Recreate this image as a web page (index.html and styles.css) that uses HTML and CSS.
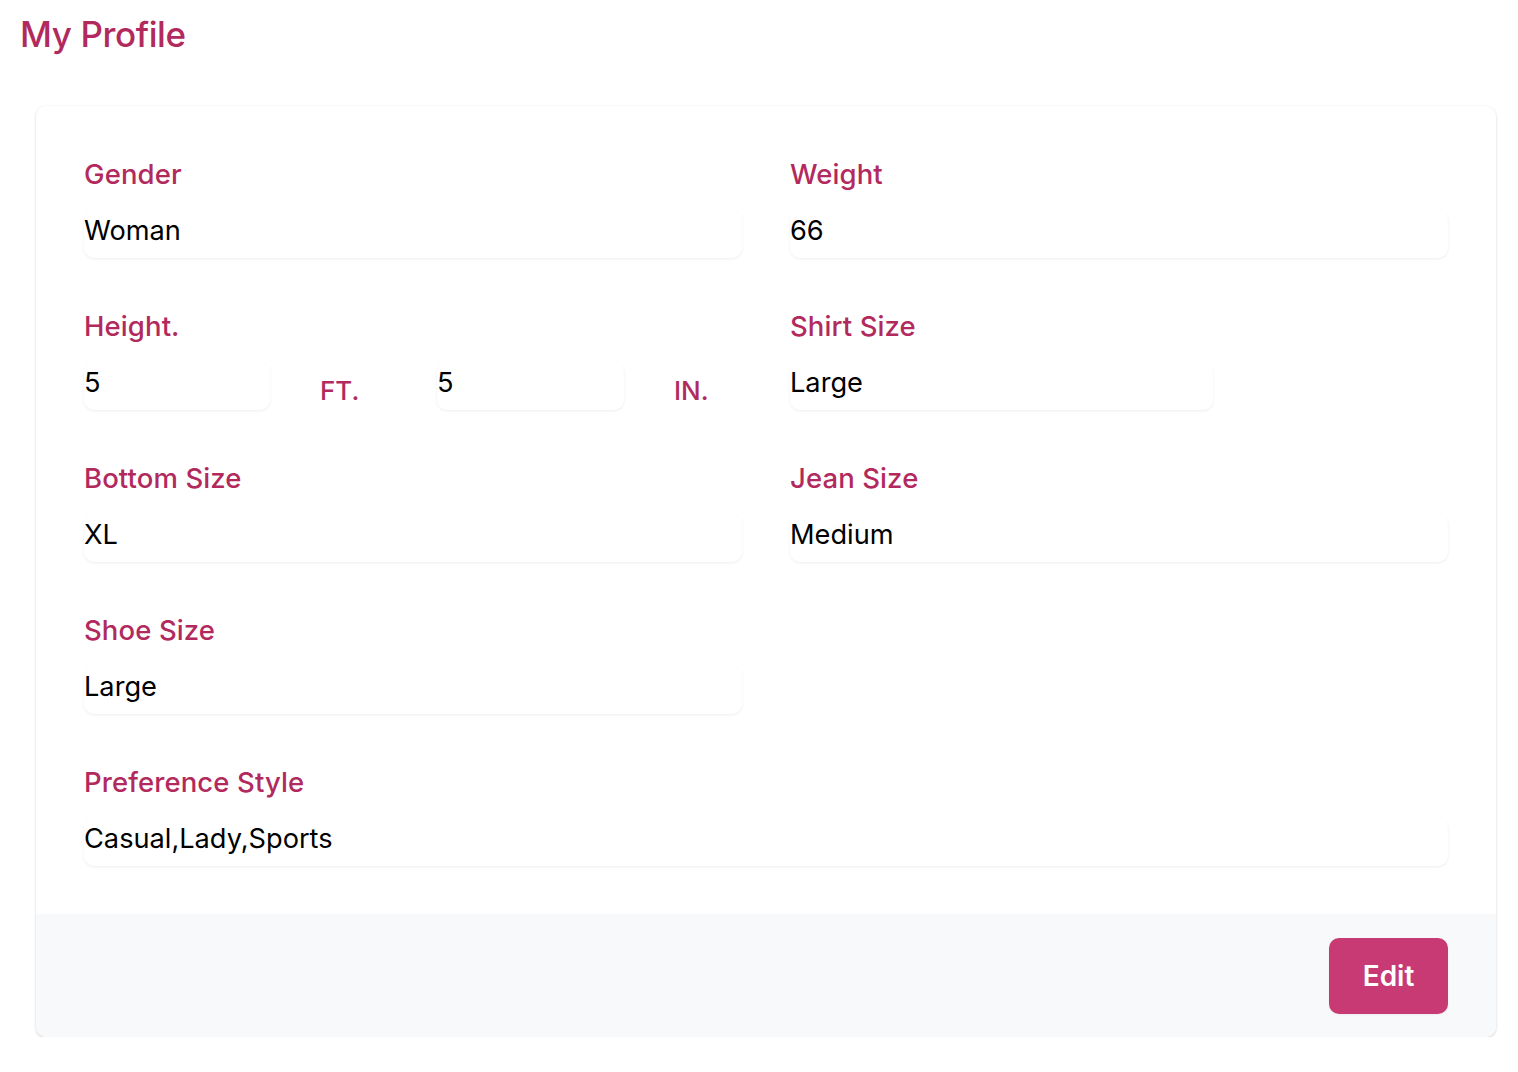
FILE: index.html
```html
<!DOCTYPE html>
<html>
<head>
<meta charset="utf-8">
<link rel="stylesheet" href="styles.css">
</head>
<body>
<h1 class="title">My Profile</h1>
<div class="card">
  <div class="card-body">
    <div class="field">
      <label class="label">Gender</label>
      <div class="input">Woman</div>
    </div>
    <div class="field">
      <label class="label">Weight</label>
      <div class="input">66</div>
    </div>
    <div class="field">
      <label class="label">Height.</label>
      <div class="height-row">
        <div class="input">5</div>
        <span class="unit">FT.</span>
        <div class="input">5</div>
        <span class="unit">IN.</span>
      </div>
    </div>
    <div class="field">
      <label class="label">Shirt Size</label>
      <div class="input input-shirt">Large</div>
    </div>
    <div class="field">
      <label class="label">Bottom Size</label>
      <div class="input">XL</div>
    </div>
    <div class="field">
      <label class="label">Jean Size</label>
      <div class="input">Medium</div>
    </div>
    <div class="field">
      <label class="label">Shoe Size</label>
      <div class="input">Large</div>
    </div>
    <div class="field field-full">
      <label class="label">Preference Style</label>
      <div class="input">Casual,Lady,Sports</div>
    </div>
  </div>
  <div class="card-footer">
    <button class="btn">Edit</button>
  </div>
</div>
</body>
</html>
```
FILE: styles.css
```css
* { box-sizing: border-box; }
body {
  margin: 0;
  padding: 0 22px 0 20px;
  font-family: Inter, "Noto Sans", sans-serif;
  background: #fff;
  color: #000;
}
.title {
  margin: 0;
  padding-top: 12px;
  height: 106px;
  font-size: 35px;
  line-height: 44px;
  font-weight: 500;
  color: #b22a5d;
  letter-spacing: -0.4px;
}
.card {
  margin-left: 16px;
  width: 1460px;
  border-radius: 10px;
  background: #fff;
  box-shadow: 0 1px 3px rgba(0,0,0,0.14), 0 1px 2px rgba(0,0,0,0.07);
  overflow: hidden;
}
.card-body {
  padding: 50px 48px 48px;
  display: grid;
  grid-template-columns: 1fr 1fr;
  column-gap: 48px;
  row-gap: 50px;
}
.field-full { grid-column: 1 / span 2; }
.label {
  display: block;
  padding-top: 2px;
  font-size: 27.5px;
  line-height: 32px;
  font-weight: 500;
  color: #b22a5d;
  margin-bottom: 20px;
  letter-spacing: 0.1px;
}
.input {
  height: 48px;
  border-radius: 10px;
  background: #fff;
  box-shadow: 0 1px 3px rgba(0,0,0,0.07);
  font-size: 27.2px;
  line-height: 42px;
  color: #000;
}
.input-shirt { width: 423px; }
.height-row {
  display: grid;
  grid-template-columns: 186px 167px 187px 1fr;
  align-items: start;
}
.unit {
  padding-left: 50px;
  padding-top: 11px;
  font-size: 26px;
  line-height: 36px;
  font-weight: 500;
  color: #b22a5d;
}
.card-footer {
  background: #f8f9fb;
  padding: 24px 48px 23px;
  display: flex;
  justify-content: flex-end;
}
.btn {
  width: 119px;
  height: 76px;
  border: none;
  border-radius: 10px;
  background: #c73a73;
  color: #fff;
  font-family: Inter, "Noto Sans", sans-serif;
  font-size: 28px;
  font-weight: 600;
  box-shadow: 0 1px 2px rgba(0,0,0,0.05);
}
```
